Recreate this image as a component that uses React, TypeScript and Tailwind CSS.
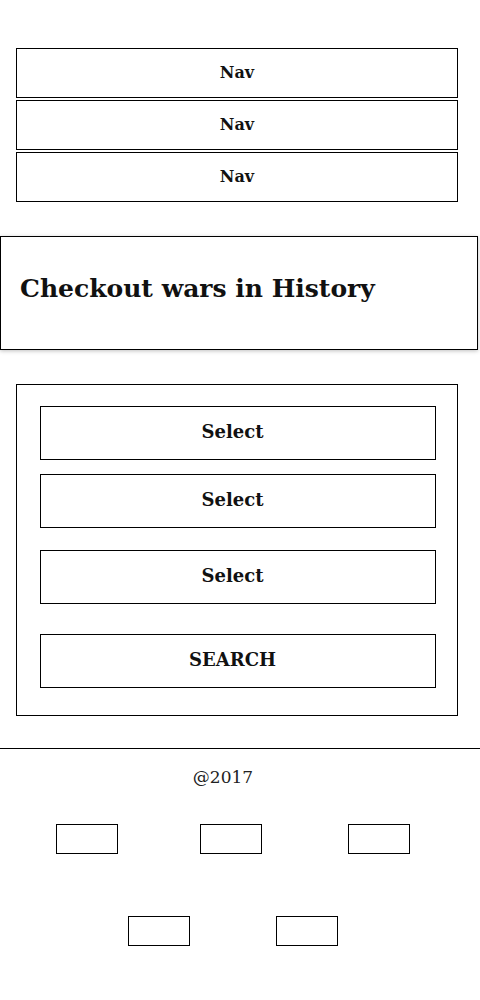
const serif = { fontFamily: '"DejaVu Serif", "Liberation Serif", serif' }

function NavItem() {
  return (
    <div className="h-[50px] border border-black flex items-center justify-center text-[16px] font-bold text-[#111]">
      Nav
    </div>
  )
}

function SelectBox({ label }: { label: string }) {
  return (
    <div className="ml-[23px] w-[396px] h-[54px] border border-black flex items-center justify-center pr-[11px] pb-[4px] text-[18px] font-bold text-[#111]">
      {label}
    </div>
  )
}

function FooterBox() {
  return <div className="w-[62px] h-[30px] border border-black shrink-0" />
}

export default function App() {
  return (
    <div className="w-[480px] bg-white text-black" style={serif}>
      <nav className="pt-[48px] px-4 flex flex-col gap-[2px] w-[474px]">
        <NavItem />
        <NavItem />
        <NavItem />
      </nav>

      <header className="mt-[34px] w-[478px] h-[114px] border border-black shadow-[0_1px_4px_rgba(0,0,0,0.25)] flex items-center pl-[19px] pb-[10px]">
        <h1 className="text-[25px] font-bold leading-none text-[#111]">Checkout wars in History</h1>
      </header>

      <section className="mt-[34px] mx-4 w-[442px] h-[332px] border border-black pt-[21px]">
        <SelectBox label="Select" />
        <div className="mt-[14px]">
          <SelectBox label="Select" />
        </div>
        <div className="mt-[22px]">
          <SelectBox label="Select" />
        </div>
        <div className="mt-[30px]">
          <SelectBox label="SEARCH" />
        </div>
      </section>

      <footer className="mt-[32px] border-t border-black">
        <p className="text-center pr-[34px] mt-[16px] text-[17px] leading-[24px] text-[#222]">@2017</p>
        <div className="mt-[35px] flex pl-[56px] gap-[82px]">
          <FooterBox />
          <FooterBox />
          <div className="ml-[4px]">
            <FooterBox />
          </div>
        </div>
        <div className="mt-[62px] flex pl-[128px] gap-[86px]">
          <FooterBox />
          <FooterBox />
        </div>
      </footer>
    </div>
  )
}
